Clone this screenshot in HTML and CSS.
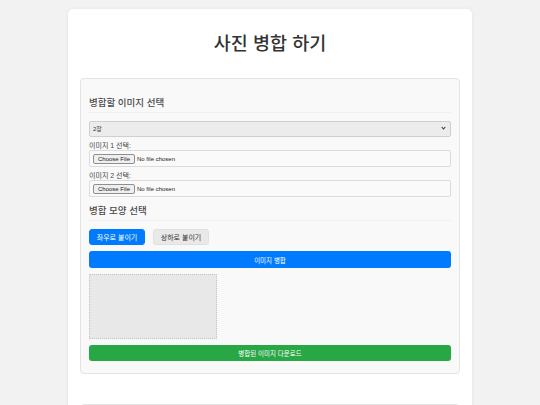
FILE: index.html
```html
<!DOCTYPE html>
<html lang="ko">
<head>
<meta charset="utf-8">
<title>사진 병합 하기</title>
<link rel="stylesheet" href="styles.css">
</head>
<body>
<div class="container">
  <h1 class="title">사진 병합 하기</h1>
  <section class="panel">
    <h3 class="panel-title">병합할 이미지 선택</h3>
    <div class="select-wrap">
      <select class="count-select">
        <option>2장</option>
        <option>3장</option>
        <option>4장</option>
      </select>
      <span class="select-arrow"></span>
    </div>
    <label class="file-label">이미지 1 선택:</label>
    <input class="file-input" type="file">
    <label class="file-label">이미지 2 선택:</label>
    <input class="file-input" type="file">
    <h3 class="panel-title second">병합 모양 선택</h3>
    <div class="mode-row">
      <button class="mode-btn active">좌우로 붙이기</button>
      <button class="mode-btn">상하로 붙이기</button>
    </div>
    <button class="wide-btn merge">이미지 병합</button>
    <div class="preview"></div>
    <button class="wide-btn download">병합된 이미지 다운로드</button>
  </section>
  <section class="panel next"></section>
</div>
</body>
</html>
```
FILE: styles.css
```css
* { box-sizing: border-box; }
html, body { margin: 0; padding: 0; }
body {
  background: #f2f2f2;
  font-family: "Liberation Sans", "Noto Sans CJK KR", sans-serif;
  color: #333;
}
.container {
  width: 404px;
  margin: 9px auto 0;
  background: #fff;
  border-radius: 5px;
  padding: 12px 12px 0;
  box-shadow: 0 0 4px rgba(0,0,0,0.06);
}
.title {
  font-size: 18.5px;
  line-height: 24px;
  font-weight: 500;
  text-align: center;
  margin: 11px 0 22px;
  color: #333;
}
.panel {
  background: #f9f9f9;
  border: 1px solid #e4e4e4;
  border-radius: 4px;
  padding: 10px 8px 12px;
}
.panel-title {
  font-size: 9.5px;
  line-height: 14px;
  font-weight: 500;
  color: #4a4a4a;
  margin: 7px 0 0;
  padding-bottom: 2px;
  border-bottom: 1px solid #efefef;
}
.select-wrap {
  position: relative;
  margin-top: 8px;
}
.count-select {
  display: block;
  width: 100%;
  height: 16px;
  font-size: 6px;
  font-family: inherit;
  padding: 0 3px;
  background: #ececec;
  border: 1px solid #cfcfcf;
  border-radius: 2px;
  color: #333;
  -webkit-appearance: none;
  appearance: none;
}
.select-arrow {
  position: absolute;
  right: 6px;
  top: 5px;
  width: 3px;
  height: 3px;
  border-right: 1.2px solid #333;
  border-bottom: 1.2px solid #333;
  transform: rotate(45deg);
  pointer-events: none;
}
.file-label {
  display: block;
  font-size: 7px;
  line-height: 9px;
  margin-top: 4px;
  color: #444;
}
.file-input {
  display: block;
  width: 100%;
  height: 17px;
  padding: 3px 3px;
  font-size: 6px;
  font-family: inherit;
  background: #fafafa;
  border: 1px solid #dcdcdc;
  border-radius: 2px;
  color: #222;
}
.file-input::file-selector-button {
  font-size: 6px;
  font-family: inherit;
  padding: 1px 4px;
  margin-right: 2px;
  border: 1px solid #8f8f8f;
  border-radius: 2px;
  background: #efefef;
  color: #222;
}
.mode-row {
  display: flex;
  gap: 8px;
  margin-top: 8px;
}
.mode-btn {
  width: 56px;
  height: 16px;
  padding: 0;
  font-size: 7px;
  font-family: inherit;
  border: 1px solid #e0e0e0;
  border-radius: 3px;
  background: #e9e9e9;
  color: #333;
}
.mode-btn.active {
  background: #007bff;
  border-color: #007bff;
  color: #fff;
}
.wide-btn {
  display: block;
  width: 100%;
  height: 17px;
  margin-top: 6px;
  padding: 0;
  border: none;
  border-radius: 3px;
  font-size: 6.5px;
  font-family: inherit;
  color: #fff;
}
.merge { background: #007bff; }
.download { background: #28a745; height: 16px; }
.preview {
  width: 128px;
  height: 65px;
  margin-top: 6px;
  background: #e8e8e8;
  border: 1px dotted #c4c4c4;
}
.panel.next {
  margin-top: 30px;
  height: 60px;
}
```
